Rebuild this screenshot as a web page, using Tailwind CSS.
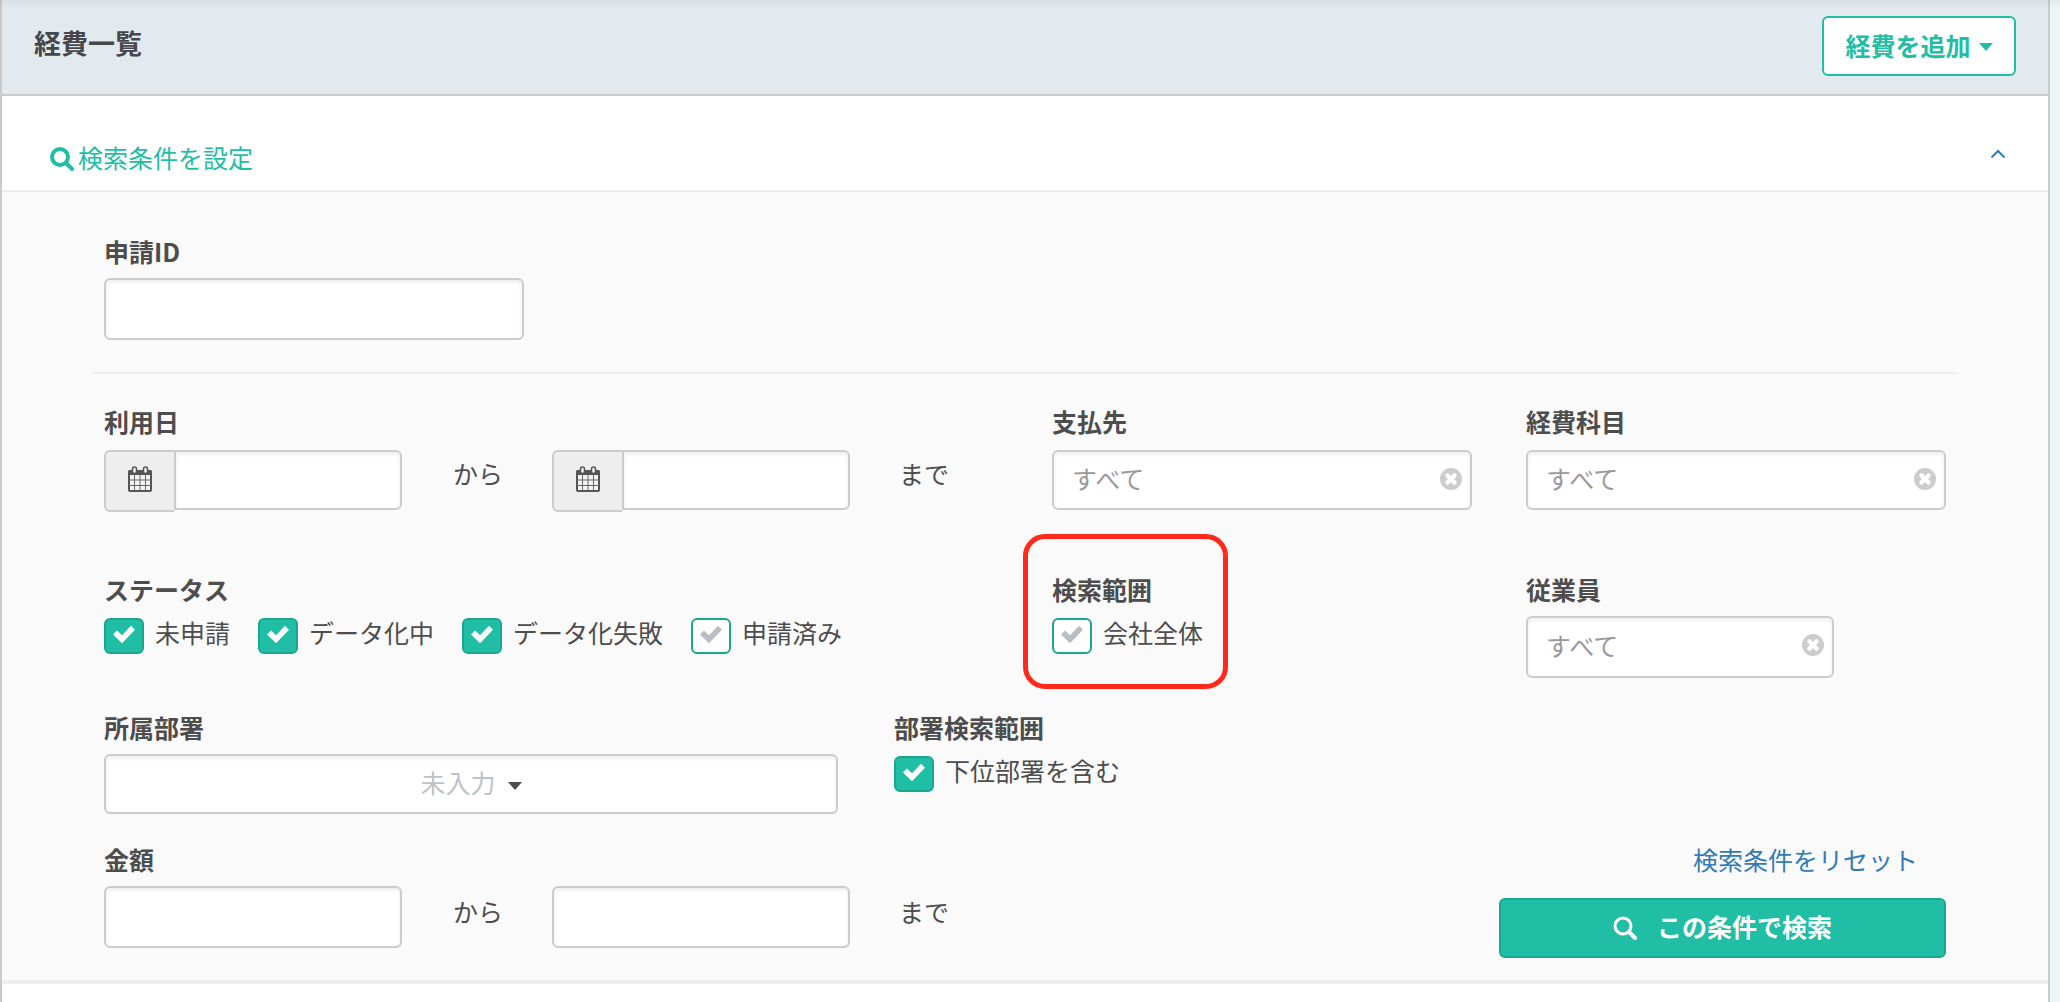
<!DOCTYPE html>
<html lang="ja">
<head>
<meta charset="utf-8">
<meta name="viewport" content="width=device-width, initial-scale=1">
<title>経費一覧</title>
<script src="https://cdn.jsdelivr.net/npm/@tailwindcss/browser@4"></script>
</head>
<body class="relative min-h-screen bg-[#eff4f6] pr-[10px] font-['Noto_Sans_CJK_JP',sans-serif] text-[25px] leading-9 text-[#4d4d4d]">
<svg class="hidden" aria-hidden="true">
  <symbol id="check" viewBox="0 0 40 36"><path d="M9 16.500 13 12.600 18 17.200 27 7.800 31 11.800 18 25.200Z" fill="currentColor"/></symbol>
  <symbol id="search" viewBox="0 0 24 24"><circle cx="10" cy="10" r="8" fill="none" stroke="currentColor" stroke-width="4"/><path d="M16 16 22 22" stroke="currentColor" stroke-width="4" stroke-linecap="round"/></symbol>
  <symbol id="clear" viewBox="0 0 22 22"><circle cx="11" cy="11" r="11" fill="#ccc"/><path d="M7.500 7.500 14.500 14.500M14.500 7.500 7.500 14.500" stroke="#fff" stroke-width="4.500" stroke-linecap="round"/></symbol>
  <symbol id="calendar" viewBox="0 0 24 26">
    <rect x="1" y="5" width="22" height="20" rx="1" fill="#f4f4f4" stroke="#555" stroke-width="2"/>
    <path d="M0 9V6q0-2 2-2h20q2 0 2 2v3z" fill="#555"/>
    <path d="M6.500 9v16M12 9v16M17.500 9v16M1 14h22M1 19.500h22" stroke="#666" stroke-width="1"/>
    <rect x="4.500" y="1" width="4" height="6.500" rx="2" fill="#f4f4f4" stroke="#555" stroke-width="1.500"/>
    <rect x="15.500" y="1" width="4" height="6.500" rx="2" fill="#f4f4f4" stroke="#555" stroke-width="1.500"/>
  </symbol>
</svg>
<div class="pointer-events-none absolute inset-x-0 top-0 h-2 bg-linear-to-b from-black/5 to-transparent"></div>
<div class="min-h-screen border-x-2 border-[#c8cacc] bg-white">
  <header class="flex h-24 items-start justify-between border-b-2 border-[#c8cacc] bg-[#e2eaf0] pr-8 pl-8">
    <h1 class="pt-[25px] text-[27px] font-bold text-[#47474b]">経費一覧</h1>
    <button type="button" class="mt-4 flex h-[60px] w-[194px] items-center justify-center gap-2 rounded-md border-2 border-[#1fbea5] bg-white pb-[2px] font-bold text-[#1fbea5]">経費を追加
      <svg class="mt-1 h-2 w-[14px]" viewBox="0 0 14 8" fill="currentColor" aria-hidden="true"><path d="M0 0h14L7 8z"/></svg>
    </button>
  </header>

  <main>
    <div class="flex h-24 items-start justify-between border-b-2 border-[#ebebeb] pt-[43px] pr-[42px] pl-12">
      <a href="#" class="flex items-center gap-1 text-[#1fbea5]"><svg class="mt-1 size-6" aria-hidden="true"><use href="#search"/></svg>検索条件を設定</a>
      <a href="#" aria-label="閉じる" class="pt-[10px] text-[#337ab7]"><svg class="h-[10px] w-4" viewBox="0 0 16 10" fill="none" stroke="currentColor" stroke-width="2" aria-hidden="true"><path d="M1.500 8.500 8 2l6.500 6.500"/></svg></a>
    </div>

    <form class="border-b-4 border-[#eee] bg-[#fafafa] px-[102px] pt-[41px] pb-[22px]">
      <div class="grid grid-cols-12 gap-x-[54px]">
        <div class="col-span-3">
          <label for="request-id" class="mb-[9px] block font-bold">申請ID</label>
          <input id="request-id" type="text" class="block h-[62px] w-full rounded-md border-2 border-[#ccc] bg-white px-5 shadow-[inset_0_2px_4px_rgba(0,0,0,0.08)]">
        </div>
      </div>

      <hr class="-mx-3 mt-8 mb-[29px] border-t-2 border-[#eee]">

      <div class="grid grid-cols-12 gap-x-[54px]">
        <div class="col-span-6">
          <label for="date-from" class="mb-[11px] block font-bold">利用日</label>
          <div class="flex items-start pr-12">
            <div class="flex flex-1 items-start">
              <span class="flex h-[62px] w-[70px] shrink-0 items-center justify-center rounded-l-md border-2 border-r-0 border-[#ccc] bg-[#eee] pb-1"><svg class="h-[26px] w-6" aria-hidden="true"><use href="#calendar"/></svg></span>
              <input id="date-from" type="text" class="block h-[60px] w-full min-w-0 rounded-r-md border-2 border-[#ccc] bg-white px-4 shadow-[inset_0_2px_4px_rgba(0,0,0,0.08)]">
            </div>
            <span class="w-[150px] shrink-0 pl-[51px] leading-[46px] whitespace-nowrap">から</span>
            <div class="flex flex-1 items-start">
              <span class="flex h-[62px] w-[70px] shrink-0 items-center justify-center rounded-l-md border-2 border-r-0 border-[#ccc] bg-[#eee] pb-1"><svg class="h-[26px] w-6" aria-hidden="true"><use href="#calendar"/></svg></span>
              <input aria-label="利用日の終わり" type="text" class="block h-[60px] w-full min-w-0 rounded-r-md border-2 border-[#ccc] bg-white px-4 shadow-[inset_0_2px_4px_rgba(0,0,0,0.08)]">
            </div>
            <span class="w-[100px] shrink-0 pl-[49px] leading-[46px] whitespace-nowrap">まで</span>
          </div>
        </div>
        <div class="col-span-3">
          <label for="payee" class="mb-[11px] block font-bold">支払先</label>
          <div class="relative">
            <input id="payee" type="text" placeholder="すべて" class="block h-[60px] w-full rounded-md border-2 border-[#ccc] bg-white pr-12 pb-1 pl-[18px] shadow-[inset_0_2px_4px_rgba(0,0,0,0.08)] placeholder:text-[#999]">
            <button type="button" aria-label="支払先をクリア" class="absolute top-[18px] right-[10px]"><svg class="block size-[22px]" aria-hidden="true"><use href="#clear"/></svg></button>
          </div>
        </div>
        <div class="col-span-3">
          <label for="category" class="mb-[11px] block font-bold">経費科目</label>
          <div class="relative">
            <input id="category" type="text" placeholder="すべて" class="block h-[60px] w-full rounded-md border-2 border-[#ccc] bg-white pr-12 pb-1 pl-[18px] shadow-[inset_0_2px_4px_rgba(0,0,0,0.08)] placeholder:text-[#999]">
            <button type="button" aria-label="経費科目をクリア" class="absolute top-[18px] right-[10px]"><svg class="block size-[22px]" aria-hidden="true"><use href="#clear"/></svg></button>
          </div>
        </div>
      </div>

      <div class="mt-[59px] grid grid-cols-12 gap-x-[54px]">
        <fieldset class="col-span-6">
          <legend class="mb-[11px] block font-bold">ステータス</legend>
          <div class="flex items-start gap-7 leading-7">
            <label class="flex items-start gap-[11px]"><span class="relative block h-9 w-10"><input type="checkbox" checked class="peer block h-9 w-10 appearance-none rounded-md border-2 border-[#1ba68f] bg-white checked:bg-[#1fbea5]"><svg class="pointer-events-none absolute inset-0 h-9 w-10 text-[#b9bec4] peer-checked:text-white" aria-hidden="true"><use href="#check"/></svg></span>未申請</label>
            <label class="flex items-start gap-[11px]"><span class="relative block h-9 w-10"><input type="checkbox" checked class="peer block h-9 w-10 appearance-none rounded-md border-2 border-[#1ba68f] bg-white checked:bg-[#1fbea5]"><svg class="pointer-events-none absolute inset-0 h-9 w-10 text-[#b9bec4] peer-checked:text-white" aria-hidden="true"><use href="#check"/></svg></span>データ化中</label>
            <label class="flex items-start gap-[11px]"><span class="relative block h-9 w-10"><input type="checkbox" checked class="peer block h-9 w-10 appearance-none rounded-md border-2 border-[#1ba68f] bg-white checked:bg-[#1fbea5]"><svg class="pointer-events-none absolute inset-0 h-9 w-10 text-[#b9bec4] peer-checked:text-white" aria-hidden="true"><use href="#check"/></svg></span>データ化失敗</label>
            <label class="flex items-start gap-[11px]"><span class="relative block h-9 w-10"><input type="checkbox" class="peer block h-9 w-10 appearance-none rounded-md border-2 border-[#1ba68f] bg-white checked:bg-[#1fbea5]"><svg class="pointer-events-none absolute inset-0 h-9 w-10 text-[#b9bec4] peer-checked:text-white" aria-hidden="true"><use href="#check"/></svg></span>申請済み</label>
          </div>
        </fieldset>
        <div class="relative col-span-3">
          <fieldset>
            <legend class="mb-[11px] block font-bold">検索範囲</legend>
            <label class="flex items-start gap-[11px] leading-7"><span class="relative block h-9 w-10"><input type="checkbox" class="peer block h-9 w-10 appearance-none rounded-md border-2 border-[#1ba68f] bg-white checked:bg-[#1fbea5]"><svg class="pointer-events-none absolute inset-0 h-9 w-10 text-[#b9bec4] peer-checked:text-white" aria-hidden="true"><use href="#check"/></svg></span>会社全体</label>
          </fieldset>
          <span class="pointer-events-none absolute -top-[37px] -left-[29px] h-[155px] w-[205px] rounded-[22px] border-5 border-[#ff2a1c]"></span>
        </div>
        <div class="col-span-3 pr-28">
          <label for="employee" class="mb-[9px] block font-bold">従業員</label>
          <div class="relative">
            <input id="employee" type="text" placeholder="すべて" class="block h-[62px] w-full rounded-md border-2 border-[#ccc] bg-white pr-12 pb-1 pl-[18px] shadow-[inset_0_2px_4px_rgba(0,0,0,0.08)] placeholder:text-[#999]">
            <button type="button" aria-label="従業員をクリア" class="absolute top-[18px] right-[10px]"><svg class="block size-[22px]" aria-hidden="true"><use href="#clear"/></svg></button>
          </div>
        </div>
      </div>

      <div class="mt-[31px] grid grid-cols-12 gap-x-[54px]">
        <div class="col-span-5 pr-[2px]">
          <label for="department" class="mb-[9px] block font-bold">所属部署</label>
          <div class="relative">
            <select id="department" class="block h-[60px] w-full appearance-none rounded-md border-2 border-[#ccc] bg-white pr-[26px] pb-1 text-[#bcc2c7] shadow-[inset_0_2px_4px_rgba(0,0,0,0.08)] [text-align-last:center]"><option>未入力</option></select>
            <svg class="pointer-events-none absolute top-7 left-1/2 ml-[37px] h-2 w-[14px] text-[#4d4d4d]" viewBox="0 0 14 8" fill="currentColor" aria-hidden="true"><path d="M0 0h14L7 8z"/></svg>
          </div>
        </div>
        <fieldset class="col-span-4">
          <legend class="mb-[11px] block font-bold">部署検索範囲</legend>
          <label class="flex items-start gap-[11px] leading-7"><span class="relative block h-9 w-10"><input type="checkbox" checked class="peer block h-9 w-10 appearance-none rounded-md border-2 border-[#1ba68f] bg-white checked:bg-[#1fbea5]"><svg class="pointer-events-none absolute inset-0 h-9 w-10 text-[#b9bec4] peer-checked:text-white" aria-hidden="true"><use href="#check"/></svg></span>下位部署を含む</label>
        </fieldset>
      </div>

      <div class="mt-[27px] grid grid-cols-12 gap-x-[54px]">
        <div class="col-span-6">
          <label for="amount-from" class="mb-[9px] block font-bold">金額</label>
          <div class="flex items-start pr-12">
            <input id="amount-from" type="text" class="block h-[62px] w-full min-w-0 flex-1 rounded-md border-2 border-[#ccc] bg-white px-4 shadow-[inset_0_2px_4px_rgba(0,0,0,0.08)]">
            <span class="w-[150px] shrink-0 pl-[51px] leading-[50px] whitespace-nowrap">から</span>
            <input aria-label="金額の上限" type="text" class="block h-[62px] w-full min-w-0 flex-1 rounded-md border-2 border-[#ccc] bg-white px-4 shadow-[inset_0_2px_4px_rgba(0,0,0,0.08)]">
            <span class="w-[100px] shrink-0 pl-[49px] leading-[50px] whitespace-nowrap">まで</span>
          </div>
        </div>
        <div class="col-span-6 flex flex-col items-end">
          <a href="#" class="mr-7 mb-[21px] text-[#337ab7]">検索条件をリセット</a>
          <button type="submit" class="flex h-[60px] w-1/2 items-center justify-center gap-5 rounded-md border-2 border-[#1ba68f] bg-[#1fbea5] pb-1 font-bold text-white"><svg class="mt-1 size-6" viewBox="0 0 24 24" fill="none" stroke="currentColor" stroke-width="3" aria-hidden="true"><circle cx="10" cy="10" r="8"/><path d="m16 16 6 6" stroke-width="4" stroke-linecap="round"/></svg>この条件で検索</button>
        </div>
      </div>
    </form>
  </main>
</div>
</body>
</html>
